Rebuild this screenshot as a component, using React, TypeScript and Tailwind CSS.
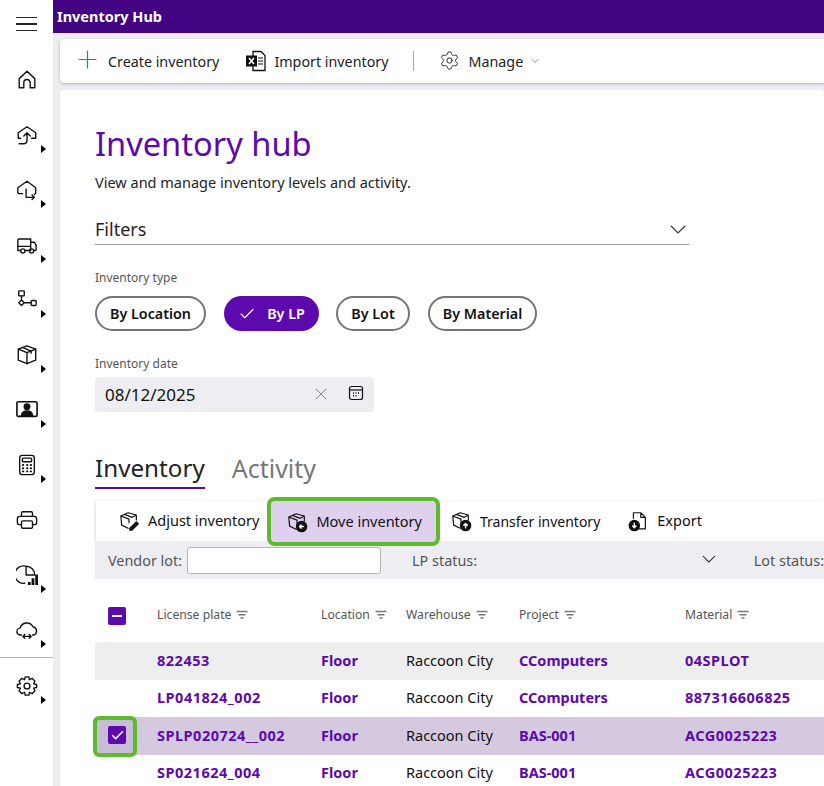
import { ChevronDown, Check, X, Plus, Settings } from 'lucide-react';
import type { ReactNode } from 'react';

const S = ({ children, size = 24, cls = '' }: { children: ReactNode; size?: number; cls?: string }) => (
  <svg width={size} height={size} viewBox="0 0 24 24" fill="none" stroke="currentColor" strokeWidth="1.5" strokeLinecap="round" strokeLinejoin="round" className={cls}>
    {children}
  </svg>
);

const Chevron = ({ w, cls = '' }: { w: number; cls?: string }) => (
  <svg width={w} height={w / 2 + 1} viewBox="0 0 16 9" fill="none" stroke="currentColor" strokeWidth="1.2" className={cls}>
    <path d="M1 1L8 8L15 1" />
  </svg>
);

const navIcons: { icon: ReactNode; arrow: boolean }[] = [
  { arrow: false, icon: <path d="M3.5 20.5V10.5L12 2.5L20.5 10.5V20.5H15.5V15A3.5 3.5 0 0 0 8.5 15V20.5Z" /> },
  { arrow: true, icon: <><path d="M5 15.5H2.5V9.5L12 3L21.5 9.5V15.5H17" /><path d="M12 18V9.5M8.5 13L12 9.5L15.5 13M12 18Q12 21.5 8 21.5H3.5" /></> },
  { arrow: true, icon: <><path d="M7 16H3L2 15V9.5L12 2.5L21.5 9.5V15.5L20 17" /><path d="M11 11V20H20M17.5 17.5L20 20L17.5 22.5" /></> },
  { arrow: true, icon: <><path d="M5 18H2V6.5A1 1 0 0 1 3 5.5H16V18H10" /><path d="M16 9H20L22 12.5V17A1 1 0 0 1 21 18H19.5M2 13.5H16" /><circle cx="7.5" cy="18.5" r="2.3" /><circle cx="17" cy="18.5" r="2.3" /></> },
  { arrow: true, icon: <><rect x="3" y="2" width="6" height="5.5" rx=".5" /><path d="M6 7.5V12M6 12L9 15L6 18L3 15ZM9 15H16.5" /><rect x="16.5" y="12.5" width="5.5" height="5.5" rx="1" /></> },
  { arrow: true, icon: <><path d="M12 2L21.5 5.5V17.5L12 21.5L2.5 17.5V5.5Z" /><path d="M2.5 5.5L12 9.5L21.5 5.5M12 9.5V21.5M7 3.8L16.5 7.8V10" /></> },
  { arrow: true, icon: <><rect x="1" y="3" width="22" height="16" rx="1.5" strokeWidth="1.8" /><circle cx="12" cy="8.5" r="3" fill="currentColor" /><path d="M6 18.5Q6 13 12 13T18 18.5Z" fill="currentColor" /></> },
  { arrow: true, icon: <><rect x="4" y="1.5" width="16" height="21" rx="3" /><rect x="7" y="4.5" width="10" height="4" rx="1" /><path d="M7.5 12H8M12 12H12.5M16 12H16.5M7.5 15.5H8M12 15.5H12.5M16 15.5H16.5M7.5 19H8M12 19H12.5M16 19H16.5" strokeWidth="2" /></> },
  { arrow: false, icon: <><path d="M6 8V4.5A1.5 1.5 0 0 1 7.5 3H16.5A1.5 1.5 0 0 1 18 4.5V8" /><path d="M6 17H3.5A2 2 0 0 1 1.5 15V10.5A2.5 2.5 0 0 1 4 8H20A2.5 2.5 0 0 1 22.5 10.5V15A2 2 0 0 1 20.5 17H18" /><rect x="6" y="13" width="12" height="8" rx="1.5" /></> },
  { arrow: true, icon: <><path d="M11 2.5A9.5 9.5 0 1 0 9.5 21M11 2.5V12H20.5A9.5 9.5 0 0 0 11 2.5Z" /><path d="M14.5 23V19.5M18.5 23V15.5M22.5 23V11.5" strokeWidth="3" strokeLinecap="butt" /></> },
  { arrow: true, icon: <><path d="M6 17.5H5A3.7 3.7 0 0 1 4.5 10 A7.5 7.5 0 0 1 18.5 8.5 A4.7 4.7 0 0 1 19.5 17.5H18" /><path d="M7.5 19H16.5M9.5 17L7.5 19L9.5 21M14.5 17L16.5 19L14.5 21" /></> },
];

function NavItem({ icon, arrow }: { icon: ReactNode; arrow: boolean }) {
  return (
    <div className="relative flex h-[55px] w-full shrink-0 items-center justify-center">
      <S size={22}>{icon}</S>
      {arrow && <span className="absolute left-[41px] top-[38px] h-0 w-0 border-y-[4px] border-l-[5px] border-y-transparent border-l-black" />}
    </div>
  );
}

function Sidebar() {
  return (
    <div className="flex h-[786px] w-[53px] shrink-0 flex-col bg-white text-[#111]">
      <div className="flex h-[52px] shrink-0 items-center justify-center pb-[4px]">
        <div className="flex w-[21px] flex-col gap-[5px]">
          <div className="h-[1.5px] bg-[#222]" />
          <div className="h-[1.5px] bg-[#222]" />
          <div className="h-[1.5px] bg-[#222]" />
        </div>
      </div>
      {navIcons.map((n, i) => (
        <NavItem key={i} icon={n.icon} arrow={n.arrow} />
      ))}
      <div className="h-px shrink-0 bg-[#b5b5b5]" />
      <NavItem arrow icon={<><circle cx="12" cy="12" r="3.2" /><path d="M10 2H14L14.7 5.2L17.5 3.6L20.7 6.8L19.2 9.6L22.5 10.4V13.6L19.2 14.4L20.7 17.2L17.5 20.4L14.7 18.8L14 22H10L9.3 18.8L6.5 20.4L3.3 17.2L4.8 14.4L1.5 13.6V10.4L4.8 9.6L3.3 6.8L6.5 3.6L9.3 5.2Z" /></>} />
    </div>
  );
}

function BoxIcon({ children }: { children?: ReactNode }) {
  return (
    <S size={22} cls="shrink-0">
      <path d="M11 3L20 5.5V11M11 3L3 6.5L4 16.5L11 20M3 6.5L12 10V14M7 4.8L15.5 8L20 5.5" strokeWidth="1.3" />
      {children}
    </S>
  );
}

const Badge = ({ d }: { d: string }) => (
  <>
    <circle cx="17" cy="17" r="5.5" fill="#111" stroke="#111" />
    <path d={d} stroke="#fff" strokeWidth="1.6" />
  </>
);

function ToolButton({ icon, label, cls }: { icon: ReactNode; label: string; cls: string }) {
  return (
    <div className={`flex items-center gap-[8px] text-[#111] ${cls}`}>
      {icon}
      <span>{label}</span>
    </div>
  );
}

function Chip({ label, selected, w }: { label: string; selected?: boolean; w: string }) {
  return selected ? (
    <div className={`flex h-[35px] items-center justify-center gap-[11px] rounded-full bg-[#5c09ae] text-[14.3px] font-semibold text-white ${w}`}>
      <Check size={18} strokeWidth={1.5} />
      {label}
    </div>
  ) : (
    <div className={`flex h-[35px] items-center justify-center rounded-full border-2 border-[#757575] bg-white text-[14.3px] font-semibold text-[#111] ${w}`}>
      {label}
    </div>
  );
}

function Sort() {
  return (
    <svg width="12" height="10" viewBox="0 0 12 10" className="shrink-0 text-[#777]" stroke="currentColor" strokeWidth="1.5">
      <path d="M0.5 1.5H11.5M2.5 4.8H9.5M4.5 8H7.5" />
    </svg>
  );
}

const columns = 'grid grid-cols-[62px_164px_85px_113px_166px_1fr] items-center';
const headers = ['License plate', 'Location', 'Warehouse', 'Project', 'Material'];
const rows = [
  { lp: '822453', material: '04SPLOT', project: 'CComputers', bg: 'bg-[#eeeeee]' },
  { lp: 'LP041824_002', material: '887316606825', project: 'CComputers', bg: 'bg-white' },
  { lp: 'SPLP020724__002', material: 'ACG0025223', project: 'BAS-001', bg: 'bg-[#d5c9e0]', selected: true },
  { lp: 'SP021624_004', material: 'ACG0025223', project: 'BAS-001', bg: 'bg-white' },
];

export default function App() {
  return (
    <div className="flex h-[786px] w-[824px] overflow-hidden bg-[#edecf1] font-['Noto_Sans',sans-serif] text-[#111]">
      <Sidebar />
      <div className="flex min-w-0 flex-1 flex-col">
        <div className="flex h-[33px] shrink-0 items-center bg-[#420481] pl-[4px] text-[14.5px] font-bold text-white">Inventory Hub</div>
        <div className="ml-[7px] mt-[6px] flex h-[44px] w-[790px] shrink-0 items-center rounded-[4px] bg-white pl-[13px] text-[14.3px] text-[#222] shadow-[0_1px_3px_rgba(0,0,0,0.25)]">
          <Plus size={29} strokeWidth={1} className="mb-[3px] text-[#0fa52c]" />
          <span className="ml-[6px] pt-[2px]">Create inventory</span>
          <svg width="22" height="22" viewBox="0 0 22 22" className="ml-[26px]">
            <path d="M8 1.5H16L20 5.5V20.5H8Z" fill="#fff" stroke="#111" strokeWidth="1.3" />
            <path d="M13 8H18M13 11H18M13 14H18" stroke="#111" strokeWidth="1.2" />
            <rect x="1" y="5.5" width="11" height="11" fill="#111" />
            <path d="M4 8L9 14M9 8L4 14" stroke="#fff" strokeWidth="1.5" />
          </svg>
          <span className="ml-[7px] pt-[2px]">Import inventory</span>
          <div className="ml-[24px] h-[20px] w-px bg-[#aaa]" />
          <Settings size={21} strokeWidth={1.1} className="ml-[25px] mb-[2px] text-[#222]" />
          <span className="ml-[9px] pt-[2px]">Manage</span>
          <ChevronDown size={12} strokeWidth={1.2} className="ml-[6px] text-[#333]" />
        </div>
        <div className="ml-[7px] mt-[7px] flex-1 rounded-t-[4px] bg-white pl-[35px] pt-[31px]">
          <h1 className="text-[32.6px] leading-[46px] text-[#5c09ae]">Inventory hub</h1>
          <p className="mt-[5px] text-[14.5px] leading-[20px] text-[#222]">View and manage inventory levels and activity.</p>
          <div className="mt-[20px] flex h-[33px] w-[594px] items-center justify-between border-b border-[#a0a0a0] pt-[2px] pr-[3px]">
            <span className="text-[18px] text-[#222]">Filters</span>
            <Chevron w={16} cls="text-[#333]" />
          </div>
          <div className="mt-[24px] text-[12px] leading-[18px] text-[#555]">Inventory type</div>
          <div className="mt-[9px] flex gap-[18px]">
            <Chip label="By Location" w="w-[111px]" />
            <Chip label="By LP" selected w="w-[95px] -mr-px" />
            <Chip label="By Lot" w="w-[74px]" />
            <Chip label="By Material" w="w-[109px]" />
          </div>
          <div className="mt-[24px] text-[12px] leading-[18px] text-[#555]">Inventory date</div>
          <div className="mt-[4px] flex h-[35px] w-[279px] items-center rounded-[3px] bg-[#eeedf2] pl-[10px] pr-[10px]">
            <span className="flex-1 text-[17px] text-[#111]">08/12/2025</span>
            <X size={20} strokeWidth={0.9} className="mb-[2px] text-[#666]" />
            <svg width="16" height="16" viewBox="0 0 16 16" fill="none" stroke="#111" strokeWidth="1.2" className="ml-[17px] mb-[4px]">
              <rect x="1.5" y="1.5" width="13" height="13" rx="2" />
              <path d="M1.5 5H14.5" />
              <path d="M5 8H6M7.5 8H8.5M10 8H11M5 10.7H6M7.5 10.7H8.5" strokeWidth="1.5" />
            </svg>
          </div>
          <div className="mt-[38px] flex items-start gap-[27px]">
            <div className="h-[39px] border-b-2 border-[#5c09ae] text-[24.2px] leading-[36px] text-[#222]">Inventory</div>
            <div className="text-[25px] leading-[36px] text-[#777]">Activity</div>
          </div>
          <div className="ml-px mt-[12px] flex h-[40px] items-center bg-white pl-[22px] text-[14.5px] shadow-[0_1px_3px_rgba(0,0,0,0.25)]">
            <ToolButton cls="mr-[13px]" label="Adjust inventory" icon={<BoxIcon><path d="M13 20L20 13L22 15L15 22H13Z" fill="#111" stroke="#111" /></BoxIcon>} />
            <ToolButton
              cls="mr-[15px] mt-[1px] h-[39px] rounded-[3px] bg-[#dfd0ee] pl-[14px] pr-[13px] shadow-[0_0_0_1px_#d9d9d9,0_0_0_5px_#5fbb2e]"
              label="Move inventory"
              icon={<BoxIcon><Badge d="M19 17H15M16.5 15.3L14.8 17L16.5 18.7" /></BoxIcon>}
            />
            <ToolButton cls="mr-[27px] text-[14px]" label="Transfer inventory" icon={<BoxIcon><Badge d="M17 19.5V15M15.2 16.5L17 14.8L18.8 16.5" /></BoxIcon>} />
            <ToolButton cls="" label="Export" icon={
              <S size={22} cls="shrink-0">
                <path d="M7 9V3H15L20 8V20.5H13M15 3V8H20" strokeWidth="1.3" />
                <circle cx="8" cy="17" r="5.5" fill="#111" stroke="#111" />
                <path d="M8 14.5V19M6.2 17.5L8 19.3L9.8 17.5" stroke="#fff" strokeWidth="1.5" />
              </S>
            } />
          </div>
          <div className="flex h-[38px] items-center whitespace-nowrap bg-[#eeedf2] pl-[13px] text-[14.4px] text-[#555]">
            <span className="pt-[2px]">Vendor lot:</span>
            <div className="ml-[5px] h-[27px] w-[194px] shrink-0 rounded-[3px] border border-[#b5b5b5] bg-white" />
            <span className="ml-[31px] pt-[2px]">LP status:</span>
            <Chevron w={14} cls="ml-[225px] mb-[3px] text-[#111]" />
            <span className="ml-[38px] pt-[2px]">Lot status:</span>
          </div>
          <div className={`${columns} h-[63px] bg-white pt-[10px] text-[12.2px] text-[#555]`}>
            <div className="pl-[13px]">
              <div className="flex h-[18px] w-[18px] items-center justify-center rounded-[2px] bg-[#5c09ae]">
                <div className="h-[2px] w-[10px] bg-white" />
              </div>
            </div>
            {headers.map((h) => (
              <div key={h} className="flex items-center gap-[5px]">{h}<Sort /></div>
            ))}
          </div>
          {rows.map((r) => (
            <div key={r.lp} className={`${columns} h-[37.5px] ${r.bg} whitespace-nowrap text-[14.5px]`}>
              <div className="relative h-full pl-[13px] pt-[9px]">
                {r.selected && (
                  <>
                    <div className="absolute left-[-2px] top-[-1px] h-[41px] w-[44px] rounded-[6px] border-[4px] border-[#5fbb2e] bg-[#c9bdd6]" />
                    <div className="relative flex h-[18px] w-[18px] items-center justify-center rounded-[2px] bg-[#5c09ae] text-white">
                      <Check size={15} strokeWidth={2.4} />
                    </div>
                  </>
                )}
              </div>
              <div className="font-bold tracking-[0.5px] text-[#5c09ae]">{r.lp}</div>
              <div className="font-bold text-[#5c09ae]">Floor</div>
              <div>Raccoon City</div>
              <div className="font-bold text-[#5c09ae]">{r.project}</div>
              <div className="font-bold tracking-[0.5px] text-[#5c09ae]">{r.material}</div>
            </div>
          ))}
        </div>
      </div>
    </div>
  );
}
